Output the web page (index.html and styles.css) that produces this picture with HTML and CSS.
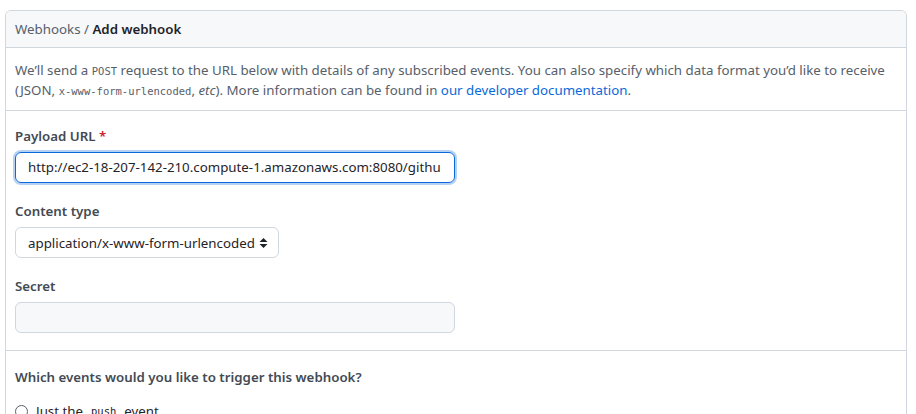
FILE: index.html
```html
<!DOCTYPE html>
<html>
<head>
<meta charset="utf-8">
<link rel="stylesheet" href="styles.css">
</head>
<body>
<div class="box">
  <div class="box-header">Webhooks / <strong>Add webhook</strong></div>
  <div class="box-intro">
    <p>We’ll send a <code>POST</code> request to the URL below with details of any subscribed events. You can also specify which data format you’d like to receive (JSON, <code>x-www-form-urlencoded</code>, <em>etc</em>). More information can be found in <a href="#">our developer documentation</a>.</p>
  </div>
  <div class="box-form">
    <div class="field">
      <label class="label">Payload URL <span class="req">*</span></label>
      <div class="input focused">http://ec2-18-207-142-210.compute-1.amazonaws.com:8080/githu</div>
    </div>
    <div class="field">
      <label class="label">Content type</label>
      <div class="select"><span>application/x-www-form-urlencoded</span>
        <svg class="caret" width="9" height="12" viewBox="0 0 9 12"><path d="M4.5 1 L8.5 5 H0.5 Z M4.5 11 L8.5 7 H0.5 Z" fill="#1f2328"/></svg>
      </div>
    </div>
    <div class="field">
      <label class="label">Secret</label>
      <div class="input secret"></div>
    </div>
  </div>
  <div class="box-events">
    <div class="label">Which events would you like to trigger this webhook?</div>
    <div class="radio-row"><span class="radio"></span>Just the <code>push</code> event.</div>
  </div>
</div>
</body>
</html>
```
FILE: styles.css
```css
* { box-sizing: border-box; }
html, body { margin: 0; padding: 0; background: #fff; height: 414px; overflow: hidden; }
body {
  font-family: "Noto Sans", "Open Sans", sans-serif;
  font-size: 13.3px;
  line-height: 20px;
  color: #1f2328;
  padding: 10px 0 0 5px;
}
.box {
  width: 902px;
  border: 1px solid #d0d7de;
  border-radius: 6px;
}
.box-header {
  background: #f6f8fa;
  border-bottom: 1px solid #d0d7de;
  border-radius: 6px 6px 0 0;
  padding: 8px 9px;
  color: #57606a;
}
.box-header strong { color: #1f2328; font-weight: 600; }
.box-intro {
  padding: 12px 9px 10px;
  border-bottom: 1px solid #d0d7de;
  color: #57606a;
}
.box-intro p { margin: 0; }
code {
  font-family: "DejaVu Sans Mono", "Liberation Mono", monospace;
  font-size: 10.5px;
  line-height: 1;
}
em { font-style: italic; }
a { color: #0969da; text-decoration: none; }
.box-form {
  padding: 15px 9px 17px;
  border-bottom: 1px solid #d0d7de;
  display: flex;
  flex-direction: column;
  gap: 18px;
}
.field { display: flex; flex-direction: column; gap: 6px; align-items: flex-start; }
.label { font-weight: 600; color: #424a53; }
.req { color: #cf222e; }
.input {
  width: 440px;
  height: 31px;
  border: 1px solid #d0d7de;
  border-radius: 6px;
  padding: 4px 12px;
  color: #1f2328;
  white-space: nowrap;
  overflow: hidden;
}
.input.focused {
  border-color: #0969da;
  box-shadow: 0 0 0 2px rgba(9,105,218,0.3);
}
.input.secret { background: #f6f8fa; }
.select {
  width: 264px;
  height: 31px;
  border: 1px solid #d0d7de;
  border-radius: 6px;
  padding: 4px 10px 4px 12px;
  display: flex;
  align-items: center;
  justify-content: space-between;
  white-space: nowrap;
}
.box-events { padding: 16px 9px 0; }
.radio-row { display: flex; align-items: center; gap: 8px; margin-top: 14px; color: #1f2328; }
.radio {
  width: 13px; height: 13px; border: 1px solid #57606a; border-radius: 50%;
  display: inline-block; flex: none;
}
```
